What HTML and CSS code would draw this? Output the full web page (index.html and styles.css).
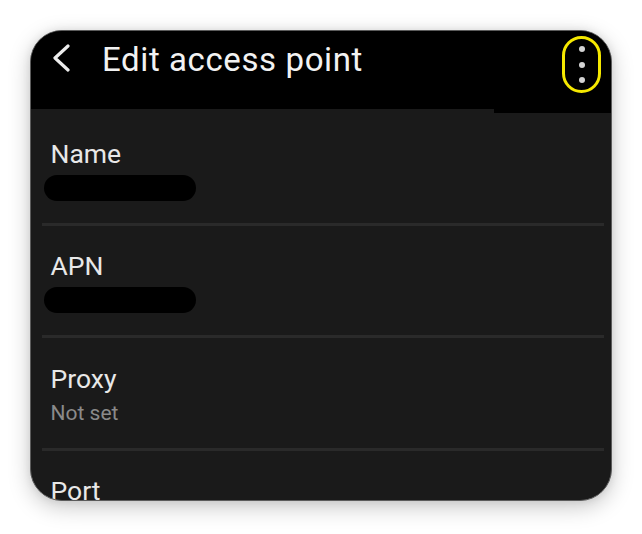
FILE: index.html
```html
<!DOCTYPE html>
<html lang="en">
<head>
<meta charset="utf-8">
<title>Edit access point</title>
<link rel="stylesheet" href="styles.css">
</head>
<body>
<div class="screen">
  <header class="header">
    <svg class="back" width="18" height="28" viewBox="0 0 18 28" aria-hidden="true">
      <polyline points="16,2 3,14 16,26" fill="none" stroke="#ececec" stroke-width="3.2" stroke-linecap="round" stroke-linejoin="round"/>
    </svg>
    <h1 class="title">Edit access point</h1>
    <div class="menu">
      <span class="dot"></span>
      <span class="dot"></span>
      <span class="dot"></span>
    </div>
  </header>
  <div class="list">
    <div class="row">
      <div class="label">Name</div>
      <div class="pill"></div>
    </div>
    <div class="row">
      <div class="label">APN</div>
      <div class="pill"></div>
    </div>
    <div class="row">
      <div class="label">Proxy</div>
      <div class="value">Not set</div>
    </div>
    <div class="row">
      <div class="label">Port</div>
    </div>
  </div>
</div>
</body>
</html>
```
FILE: styles.css
```css
* { box-sizing: border-box; }
html, body { margin: 0; padding: 0; background: #ffffff; }
body {
  font-family: Roboto, "Noto Sans", "Liberation Sans", sans-serif;
  width: 642px;
  height: 534px;
  overflow: hidden;
  padding: 30px 0 0 30px;
}
.screen {
  width: 582px;
  height: 471px;
  border: 1px solid #5c5c5c;
  border-radius: 32px;
  overflow: hidden;
  background: #1a1a1a;
  box-shadow: 0 6px 22px rgba(0, 0, 0, 0.22), 0 0 8px rgba(0, 0, 0, 0.08);
  display: flex;
  flex-direction: column;
}
.header {
  position: relative;
  z-index: 1;
  height: 78px;
  flex: none;
  background: #000;
  display: flex;
  align-items: flex-start;
  padding: 5px 10px 0 21px;
}
.header::after {
  content: "";
  position: absolute;
  right: 0;
  bottom: -4px;
  width: 117px;
  height: 4px;
  background: #000;
}
.back {
  margin-top: 8px;
  flex: none;
}
.title {
  margin: 4px 0 0 32px;
  font-size: 33px;
  line-height: 40px;
  font-weight: 400;
  color: #f2f2f2;
  letter-spacing: 0.6px;
}
.menu {
  margin-left: auto;
  width: 39px;
  height: 57px;
  border: 3px solid #f5e800;
  border-radius: 20px;
  display: flex;
  flex-direction: column;
  align-items: center;
  justify-content: center;
  gap: 9.5px;
  flex: none;
}
.dot {
  width: 6px;
  height: 6px;
  border-radius: 50%;
  background: #d4d4d4;
}
.list {
  padding: 4px 7px 0 11px;
}
.row {
  padding: 24.5px 0 22px 8.5px;
  border-bottom: 3px solid #2a2a2a;
}
.label {
  font-size: 26.5px;
  line-height: 32px;
  color: #e8e8e8;
}
.pill {
  margin: 5px 0 0 -6.5px;
  width: 152px;
  height: 26px;
  border-radius: 13px;
  background: #000;
}
.value {
  margin-top: 5px;
  font-size: 21px;
  line-height: 26px;
  color: #8a8a8a;
}
```
